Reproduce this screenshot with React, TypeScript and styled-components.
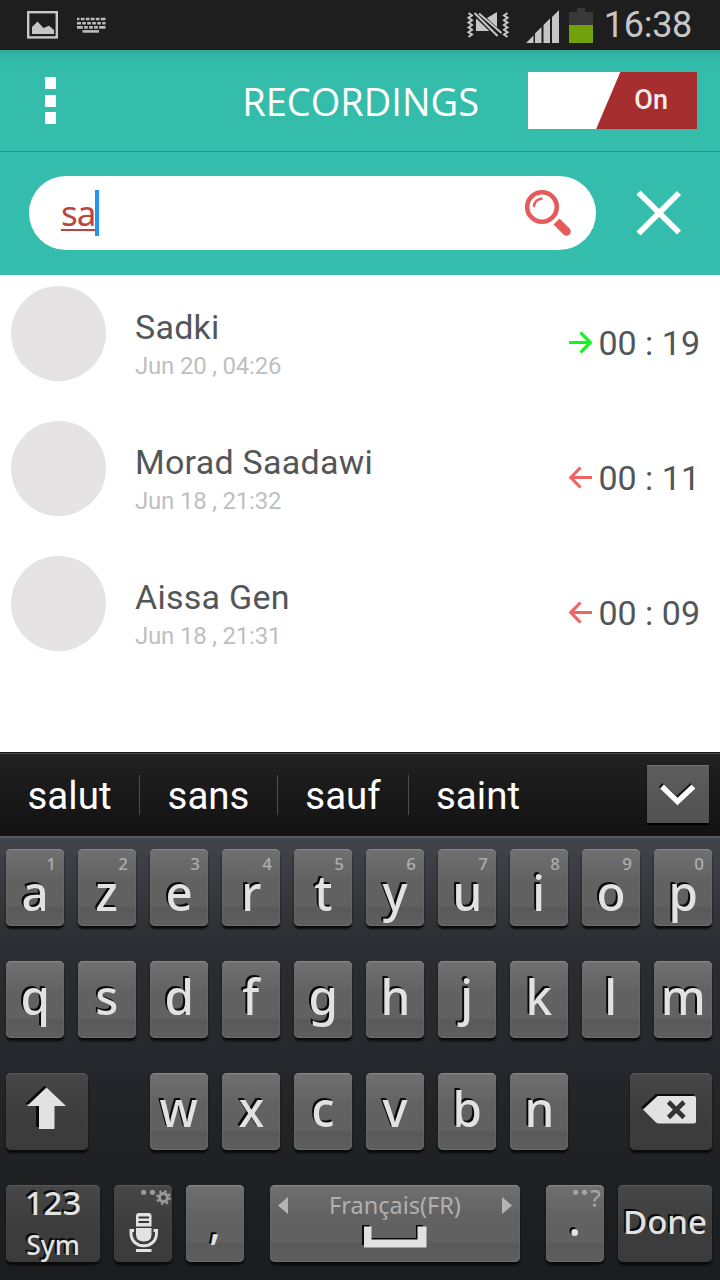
import React from "react";
import styled, { createGlobalStyle, css } from "styled-components";

const GlobalStyle = createGlobalStyle`
  *, *::before, *::after { box-sizing: border-box; }
  body { margin: 0; background: #fff; }
  svg { display: block; flex: none; }
`;

const Screen = styled.main`
  width: 720px;
  height: 1280px;
  display: flex;
  flex-direction: column;
  overflow: hidden;
  background: #fff;
  font-family: Roboto, sans-serif;
`;

/* ---------- status bar ---------- */

const StatusBar = styled.div`
  flex: none;
  height: 50px;
  padding: 0 28px 0 27px;
  display: flex;
  align-items: flex-start;
  justify-content: space-between;
  background: #1e1e1e;
`;

const Clock = styled.span`
  margin-left: 11px;
  font-size: 36px;
  line-height: 50px;
  color: #c6c6c6;
  letter-spacing: -0.3px;
`;

const StatusIcons = styled.div`
  display: flex;
`;

/* ---------- header ---------- */

const Header = styled.header`
  flex: none;
  height: 102px;
  padding: 0 23px 0 45px;
  display: flex;
  align-items: center;
  background: linear-gradient(#2da696, #31b3a2 3px, #34bcab 14px, #34bdac);
  border-bottom: 1px solid #229688;
`;

const MenuButton = styled.div`
  display: flex;
  flex-direction: column;
  gap: 5.5px;
`;

const MenuSquare = styled.i`
  width: 11px;
  height: 12px;
  background: #fff;
`;

const Title = styled.h1`
  flex: 1;
  margin: 0;
  padding-right: 49px;
  text-align: right;
  font: 400 38px/54px "Open Sans", sans-serif;
  color: #fff;
`;

const Toggle = styled.div`
  width: 169px;
  height: 57px;
  margin-top: -1px;
  padding-right: 29px;
  display: flex;
  align-items: center;
  justify-content: flex-end;
  background: linear-gradient(113deg, #fff 84.5px, #a62e2f 85.5px);
  font: 500 27px/57px Roboto, sans-serif;
  color: #fbecec;
`;

/* ---------- search ---------- */

const SearchBar = styled.div`
  flex: none;
  height: 123px;
  padding: 24px 38px 25px 29px;
  display: flex;
  align-items: center;
  justify-content: space-between;
  background: #34bdac;
`;

const SearchField = styled.div`
  width: 567px;
  height: 74px;
  padding: 0 23px 0 32px;
  display: flex;
  align-items: center;
  border-radius: 37px;
  background: #fff;
`;

const Query = styled.span`
  font: 400 35px/50px "Noto Sans", sans-serif;
  letter-spacing: -1px;
  color: #bb4440;
  text-decoration: underline;
  text-decoration-thickness: 2px;
  text-underline-offset: 3px;
`;

const Caret = styled.i`
  width: 4px;
  height: 46px;
  margin-right: auto;
  background: #2196f3;
`;

/* ---------- list ---------- */

const List = styled.section`
  flex: none;
  height: 477px;
  padding-top: 11px;
`;

const Item = styled.article`
  height: 135px;
  padding: 0 20px 0 11px;
  display: flex;
  align-items: flex-start;
`;

const Avatar = styled.div`
  width: 95px;
  height: 95px;
  border-radius: 50%;
  background: #e5e3e4;
`;

const Details = styled.div`
  flex: 1;
  padding: 21px 0 0 29px;
`;

const Name = styled.div`
  font-size: 34px;
  line-height: 40px;
  color: #525659;
  letter-spacing: 0.25px;
`;

const When = styled.div`
  margin-top: 5px;
  font-size: 24px;
  line-height: 28px;
  letter-spacing: -0.2px;
  color: #bfbfbf;
`;

const Duration = styled.div`
  padding-top: 37px;
  display: flex;
  align-items: center;
  gap: 6px;
  font-size: 34px;
  line-height: 40px;
  color: #525659;
`;

/* ---------- suggestions ---------- */

const Suggestions = styled.div`
  flex: none;
  height: 84px;
  padding: 0 11px 0 0;
  display: flex;
  align-items: center;
  background: linear-gradient(#222, #1c1c1c 30%, #121212);
  border-top: 1px solid #151515;
  box-shadow: inset 0 1px 0 #4c4c4c;
`;

const Word = styled.span<{ $w: number }>`
  width: ${(p) => p.$w}px;
  height: 40px;
  text-align: center;
  font-size: 38.5px;
  line-height: 41px;
  color: #fff;
  & + & { border-left: 1px solid #4d4d4d; }
`;

const Collapse = styled.div`
  width: 62px;
  height: 58px;
  margin: -2px 0 0 auto;
  display: flex;
  align-items: center;
  justify-content: center;
  background: linear-gradient(#5e5e5e, #505050);
  box-shadow: inset 0 1px 0 #707070, 0 2px 1px #000;
`;

/* ---------- keyboard ---------- */

const Keyboard = styled.div`
  flex: 1;
  padding: 11px 8px 0 6px;
  display: flex;
  flex-direction: column;
  gap: 35px;
  background: linear-gradient(#40454b, #2a2e33 25%, #25282c 48%, #1f2123 72%, #1b1c1e);
  border-top: 2px solid #55585c;
`;

const KeyRow = styled.div`
  height: 77px;
  display: flex;
  justify-content: space-between;
`;

const KeyGroup = styled.div`
  display: flex;
  gap: 14px;
`;

const darkKey = css`
  background: linear-gradient(#474747, #3c3c3c 60%, #3b3b3b);
  box-shadow: inset 0 1px 1px #5a5a5a, 0 3px 2px #0a0a0a;
`;

const lightKey = css`
  background: linear-gradient(#707070, #626262 40%, #616161 73%, #5a5a5a 77%, #5e5e5e);
  box-shadow: inset 0 1px 1px #8a8a8a, inset 0 -1px 1px #6d6d6d, 0 3px 2px #0a0a0a;
`;

const Key = styled.div<{ $w?: number; $dark?: boolean }>`
  position: relative;
  width: ${(p) => p.$w ?? 58}px;
  height: 77px;
  display: flex;
  flex-direction: column;
  align-items: center;
  border-radius: 5px;
  ${(p) => (p.$dark ? darkKey : lightKey)}
  font-family: "Noto Sans", sans-serif;
  color: #e2e2e2;
`;

const Letter = styled.span<{ $top: number; $size?: number }>`
  margin-top: ${(p) => p.$top}px;
  font-size: ${(p) => p.$size ?? 49}px;
  font-weight: 500;
  line-height: 38px;
  text-shadow: -1px -1px 0 #0a0a0a, -2px -2px 0 #0a0a0a;
  transform: scaleX(0.97);
`;

const Label = styled.span<{ $size: number; $top: number }>`
  margin-top: ${(p) => p.$top}px;
  font-size: ${(p) => p.$size}px;
  font-weight: 500;
  line-height: 34px;
  white-space: nowrap;
  text-shadow: -1px -1px 0 #0a0a0a, -2px -2px 0 #0a0a0a;
`;

const Hint = styled.span`
  position: absolute;
  top: 6px;
  right: 8px;
  font-size: 17px;
  font-weight: 500;
  line-height: 18px;
  color: #adadad;
`;

const Corner = styled.span`
  position: absolute;
  top: 3px;
  right: 1px;
  display: flex;
  color: #a4a4a4;
`;

const Question = styled.span`
  width: 13px;
  font-size: 24px;
  font-weight: 500;
  line-height: 20px;
`;

const Language = styled.div`
  width: 100%;
  height: 40px;
  padding: 0 7px;
  display: flex;
  align-items: center;
  justify-content: space-between;
  font-size: 23.5px;
  line-height: 38px;
  color: #b0b0b0;
`;

const Arrow = ({ incoming }: { incoming: boolean }) => (
  <svg width="24" height="24" viewBox="0 0 24 24" fill="none" strokeWidth="3.2" stroke={incoming ? "#ef6464" : "#12f51c"}>
    <path d={incoming ? "M24 11.500H3M12.500 1.500L2.800 11.500L12.500 21.500" : "M1 11.500H22M12.500 1.500L22.200 11.500L12.500 21.500"} />
  </svg>
);

const calls = [
  { name: "Sadki", when: "Jun 20 , 04:26", time: "00 : 19", incoming: false },
  { name: "Morad Saadawi", when: "Jun 18 , 21:32", time: "00 : 11", incoming: true },
  { name: "Aissa Gen", when: "Jun 18 , 21:31", time: "00 : 09", incoming: true },
];

const zigzag = (x: number, d: number) =>
  `M${x} 13l${d} 2.4l${-d} 2.4l${d} 2.4l${-d} 2.4l${d} 2.4l${-d} 2.4l${d} 2.4l${-d} 2.4l${d} 2.4l${-d} 2.4`;

export default function App() {
  return (
    <Screen>
      <GlobalStyle />
      <StatusBar>
        <svg width="80" height="50" viewBox="27 0 80 50">
          <rect x="28.2" y="12.2" width="28.6" height="25.2" fill="none" stroke="#c6c6c6" strokeWidth="2.4" />
          <path d="M32 34V27l5.500-5.500L43.500 28l5.500-2.200L54 30v4z" fill="#c6c6c6" />
          <g stroke="#bcbcbc" strokeWidth="2.6">
            <path d="M77 19h28.500" strokeDasharray="2.4 1.4 3.7 1.300 3.700 1.300 3.700 1.300 3.700 1.300 4.700" />
            <path d="M77 23.200h28.500" strokeDasharray="4 1.200 3.700 1.300 3.700 1.300 3.700 1.300 3.700 1.300 3.300" />
            <path d="M77 27.400h28.500" strokeDasharray="5.800 1.300 3.700 1.300 3.700 1.300 3.700 1.300 7" />
            <path d="M82.500 31.400h16.500" />
          </g>
        </svg>
        <StatusIcons>
          <svg width="127" height="50" viewBox="466 0 127 50">
            <g fill="none" stroke="#c6c6c6" strokeWidth="2">
              <path d={zigzag(468.5, 3.5)} />
              <path d={zigzag(507.5, -3.5)} />
            </g>
            <path d="M476 19h4l10 9.500V31H476zM487 18l10-6v16z" fill="#c6c6c6" />
            <path d="M474.500 14L497.500 36M480 15.500L501 33" stroke="#1e1e1e" strokeWidth="4" />
            <path d="M474.500 13L497.500 36M479 13.500L501.500 33" stroke="#c6c6c6" strokeWidth="2" />
            <path d="M526 43l7.500-7.500V43zM535 33.500l6.500-6.500V43h-6.500zM543.500 25l6.500-6.500v24.500h-6.500zM552 17l7-7v33h-7z" fill="#c6c6c6" />
            <path d="M569 12h8V8h8v4h8v13h-24z" fill="#383838" />
            <path d="M569 25h24v18h-24z" fill="#72a20b" />
          </svg>
          <Clock>16:38</Clock>
        </StatusIcons>
      </StatusBar>

      <Header>
        <MenuButton><MenuSquare /><MenuSquare /><MenuSquare /></MenuButton>
        <Title>RECORDINGS</Title>
        <Toggle>On</Toggle>
      </Header>

      <SearchBar>
        <SearchField>
          <Query>sa</Query>
          <Caret />
          <svg width="50" height="50" viewBox="523 188 50 50" fill="none" stroke="#e65a5c">
            <circle cx="542" cy="207" r="14.800" strokeWidth="4.600" />
            <path d="M534 206c.5-4 3.500-7 7.500-7.300" strokeWidth="2.400" strokeLinecap="round" />
            <path d="M556.500 221.500l10 10" strokeWidth="8.500" />
            <circle cx="566.500" cy="231.500" r="4.250" fill="#e65a5c" stroke="none" />
          </svg>
        </SearchField>
        <svg width="46" height="46" viewBox="0 0 46 46" stroke="#fff" strokeWidth="5.800">
          <path d="M2.500 2.500L43 42.500M43 3L2.500 43.500" />
        </svg>
      </SearchBar>

      <List>
        {calls.map((c) => (
          <Item key={c.name}>
            <Avatar />
            <Details>
              <Name>{c.name}</Name>
              <When>{c.when}</When>
            </Details>
            <Duration>
              <Arrow incoming={c.incoming} />
              <span>{c.time}</span>
            </Duration>
          </Item>
        ))}
      </List>

      <Suggestions>
        <Word $w={139}>salut</Word>
        <Word $w={138}>sans</Word>
        <Word $w={131}>sauf</Word>
        <Word $w={139}>saint</Word>
        <Collapse>
          <svg width="38" height="26" viewBox="0 0 38 26" fill="none" strokeWidth="5.400">
            <path d="M1.500 4L17.500 18.500L33.500 4" stroke="#111" />
            <path d="M3 5.500L18.500 20.500L34.500 5.500" stroke="#fff" />
          </svg>
        </Collapse>
      </Suggestions>

      <Keyboard>
        <KeyRow>
          {[..."azertyuiop"].map((l, i) => (
            <Key key={l}><Hint>{(i + 1) % 10}</Hint><Letter $top={24}>{l}</Letter></Key>
          ))}
        </KeyRow>
        <KeyRow>
          {[..."qsdfghjklm"].map((l) => (
            <Key key={l}><Letter $top={16}>{l}</Letter></Key>
          ))}
        </KeyRow>
        <KeyRow>
          <Key $w={82} $dark>
            <svg width="82" height="77" viewBox="0 0 82 77">
              <path d="M38.500 12.500L19 31h11v23h16V31h11z" fill="#0a0a0a" />
              <path d="M40.500 14.500L21 33h12v23h15.500V33H60z" fill="#e2e2e2" />
            </svg>
          </Key>
          <KeyGroup>
            {[..."wxcvbn"].map((l) => (
              <Key key={l}><Letter $top={16}>{l}</Letter></Key>
            ))}
          </KeyGroup>
          <Key $w={82} $dark>
            <svg width="82" height="77" viewBox="0 0 82 77">
              <path d="M11 34.500L26 21h38v4L28 45z" fill="#0a0a0a" />
              <path d="M13 36.500L27.500 23H64q2 0 2 2v23.500q0 2-2 2H29q-2 0-3.500-1.500z" fill="#e2e2e2" />
              <path d="M38.500 29l15.500 15.500M54 29L38.500 44.500" stroke="#333" strokeWidth="4.600" />
            </svg>
          </Key>
        </KeyRow>
        <KeyRow>
          <KeyGroup>
            <Key $w={94} $dark>
              <Label $size={33} $top={1}>123</Label>
              <Label $size={26.5} $top={8}>Sym</Label>
            </Key>
            <Key $dark>
              <Corner>
                <svg width="30" height="18" viewBox="0 0 30 18">
                  <circle cx="2.700" cy="4.300" r="2.600" fill="#999" />
                  <circle cx="11.500" cy="4.300" r="2.600" fill="#999" />
                  <circle cx="22.500" cy="9.500" r="4" fill="none" stroke="#999" strokeWidth="3" />
                  <circle cx="22.500" cy="9.500" r="6.300" fill="none" stroke="#999" strokeWidth="2.400" strokeDasharray="2.400 2.548" />
                </svg>
              </Corner>
              <svg width="58" height="77" viewBox="0 0 58 77">
                <path d="M22 41.500v-10.500q0-3 3-3h9.500q3 0 3 3v10.500z" fill="#e2e2e2" />
                <path d="M24.500 32.500h10.500M24.500 37h10.500" stroke="#333" strokeWidth="2" />
                <path d="M22 43h15.500v6.500q0 7-7.700 7t-7.800-7z" fill="#e2e2e2" />
                <path d="M20 45.500h-3v2.500c0 17 25.500 17 25.500 0v-2.500h-3" fill="none" stroke="#e2e2e2" strokeWidth="3" />
                <path d="M22 65.500h15.500" stroke="#e2e2e2" strokeWidth="3" />
              </svg>
            </Key>
            <Key><Letter $top={18} $size={44}>,</Letter></Key>
          </KeyGroup>
          <Key $w={250}>
            <Language>
              <svg width="12" height="18" viewBox="0 0 12 18"><path d="M11 1v17L1 9.500z" fill="#b4b4b4" /></svg>
              Français(FR)
              <svg width="12" height="18" viewBox="0 0 12 18"><path d="M1 1v17l10-8.500z" fill="#b4b4b4" /></svg>
            </Language>
            <svg width="66" height="24" viewBox="0 0 66 24">
              <path d="M0 0h7.500v13h46.500V0h7v20H0z" fill="#0a0a0a" />
              <path d="M2 1.500H9.500v13h46v-13h9v21h-62.500z" fill="#e2e2e2" />
            </svg>
          </Key>
          <KeyGroup>
            <Key>
              <Corner>
                <svg width="17" height="18" viewBox="0 0 17 18" fill="#a4a4a4">
                  <circle cx="2.700" cy="4.300" r="2.600" />
                  <circle cx="11.500" cy="4.300" r="2.600" />
                </svg>
                <Question>?</Question>
              </Corner>
              <Letter $top={13}>.</Letter>
            </Key>
            <Key $w={94} $dark><Label $size={33} $top={20}>Done</Label></Key>
          </KeyGroup>
        </KeyRow>
      </Keyboard>
    </Screen>
  );
}
